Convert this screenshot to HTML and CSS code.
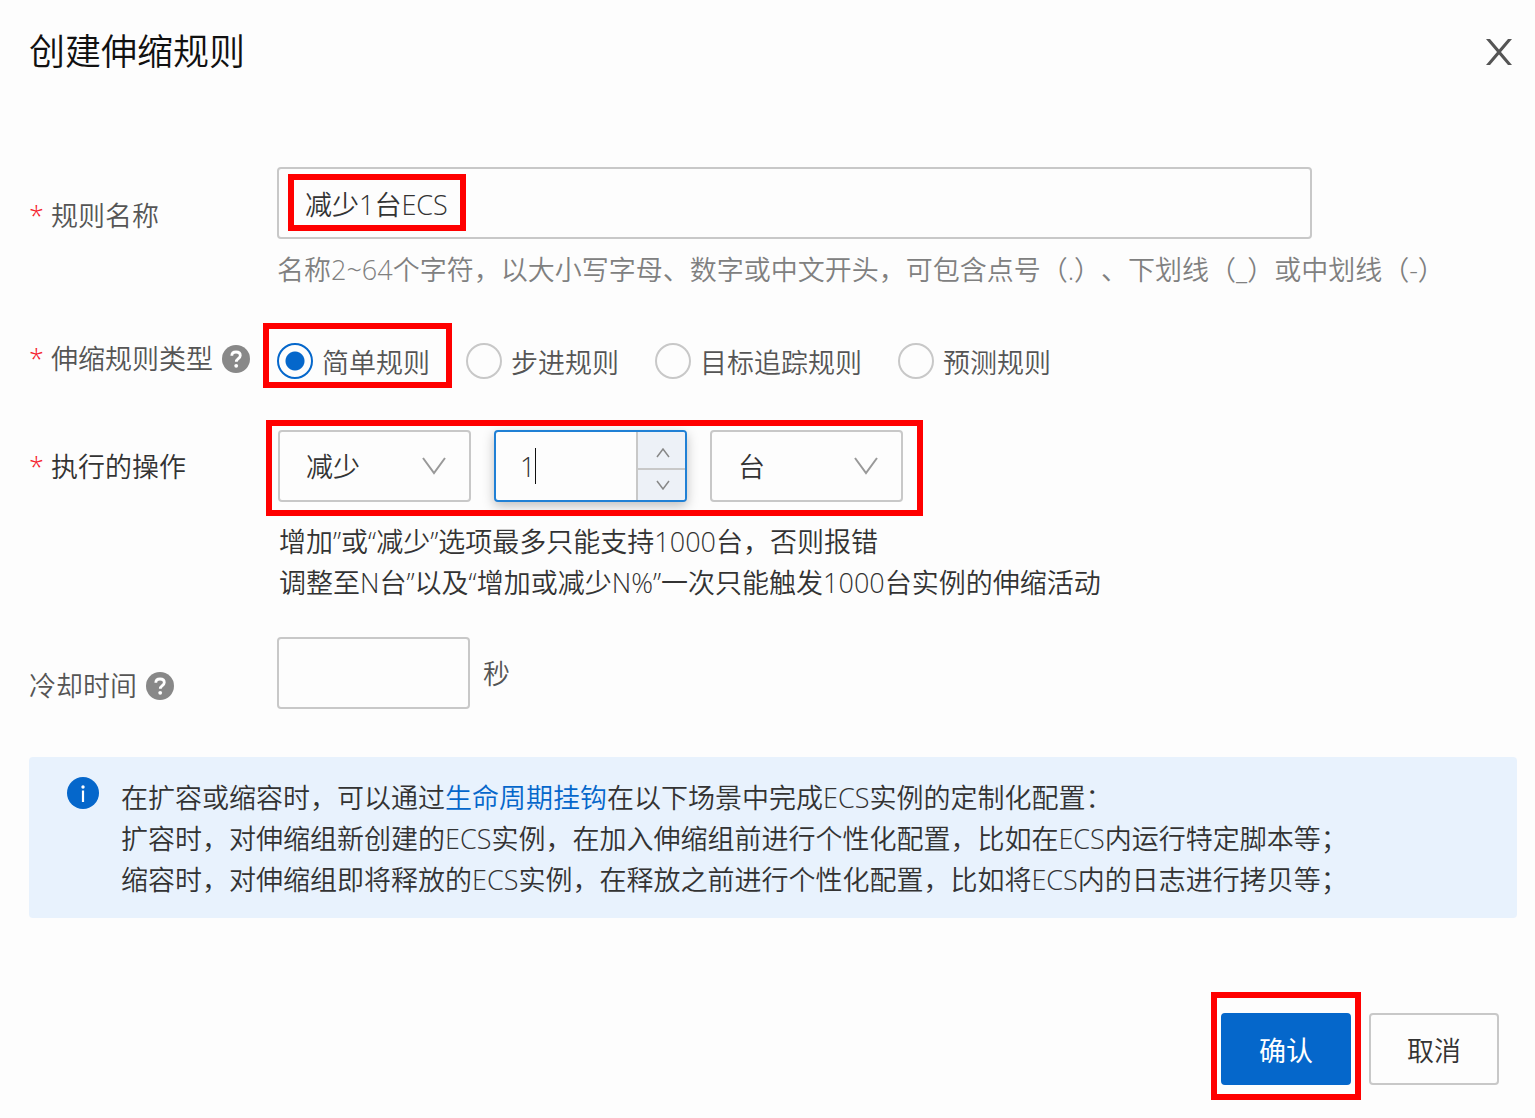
FILE: index.html
```html
<!DOCTYPE html>
<html lang="zh-CN">
<head>
  <meta charset="UTF-8">
  <meta name="viewport" content="width=device-width, initial-scale=1.0">
  <title>创建伸缩规则</title>
  <link rel="stylesheet" href="styles.css">
</head>
<body>
  <header class="header">
    <h1 class="title">创建伸缩规则</h1>
    <button type="button" class="close" aria-label="关闭">
      <svg width="28" height="28" viewBox="0 0 28 28"><path d="M1 1H5L14 11.600 23 1H27L16 14 27 27H23L14 16.400 5 27H1L12 14Z" fill="#555"/></svg>
    </button>
  </header>

  <form class="form">
    <div class="row">
      <label class="label label-low" for="ruleName"><span class="required">*</span>规则名称</label>
      <div class="field">
        <div class="name-box">
          <input type="text" class="input" id="ruleName" value="减少1台ECS">
          <span class="mark mark-name"></span>
        </div>
        <p class="hint">名称2~64个字符，以大小写字母、数字或中文开头，可包含点号（.）、下划线（_）或中划线（-）</p>
      </div>
    </div>

    <div class="row row-radio">
      <div class="label" id="typeLabel"><span class="required">*</span>伸缩规则类型
        <svg class="help" viewBox="0 0 28 28"><circle cx="14" cy="14" r="14" fill="#888"/><path d="M9.8 10.8C9.8 8.4 11.5 7 14 7s4.3 1.4 4.3 3.5c0 3-4 3.200-4 6.200" fill="none" stroke="#fff" stroke-width="2.800"/><circle cx="14.200" cy="20.800" r="1.900" fill="#fff"/></svg>
      </div>
      <div class="field radios" role="radiogroup" aria-labelledby="typeLabel">
        <label class="radio marked mark-radio"><input type="radio" name="type" checked><span class="radio-text">简单规则</span></label>
        <label class="radio"><input type="radio" name="type"><span class="radio-text">步进规则</span></label>
        <label class="radio"><input type="radio" name="type"><span class="radio-text">目标追踪规则</span></label>
        <label class="radio"><input type="radio" name="type"><span class="radio-text">预测规则</span></label>
      </div>
    </div>

    <div class="row row-action">
      <label class="label label-dark label-mid" for="action"><span class="required">*</span>执行的操作</label>
      <div class="field">
        <div class="controls marked mark-controls">
          <div class="control">
            <select class="input select" id="action">
              <option>减少</option>
              <option>增加</option>
              <option>调整至</option>
            </select>
            <svg class="arrow" viewBox="0 0 24 18"><path d="M1 1 12 16 23 1" fill="none" stroke="#999" stroke-width="2"/></svg>
          </div>
          <div class="control number">
            <input type="number" class="number-input" value="1" aria-label="数量">
            <span class="caret"></span>
            <div class="steps">
              <button type="button" class="step" aria-label="加一"><svg width="14" height="10" viewBox="0 0 14 10"><path d="M1 9 7 1 13 9" fill="none" stroke="#888" stroke-width="1.500"/></svg></button>
              <button type="button" class="step" aria-label="减一"><svg width="14" height="10" viewBox="0 0 14 10"><path d="M1 1 7 9 13 1" fill="none" stroke="#888" stroke-width="1.500"/></svg></button>
            </div>
          </div>
          <div class="control">
            <select class="input select" aria-label="单位">
              <option>台</option>
              <option>%</option>
            </select>
            <svg class="arrow" viewBox="0 0 24 18"><path d="M1 1 12 16 23 1" fill="none" stroke="#999" stroke-width="2"/></svg>
          </div>
        </div>
        <p class="note">增加”或“减少”选项最多只能支持1000台，否则报错<br>调整至N台”以及“增加或减少N%”一次只能触发1000台实例的伸缩活动</p>
      </div>
    </div>

    <div class="row row-cooldown">
      <label class="label label-low" for="cooldown">冷却时间
        <svg class="help" viewBox="0 0 28 28"><circle cx="14" cy="14" r="14" fill="#888"/><path d="M9.8 10.8C9.8 8.4 11.5 7 14 7s4.3 1.4 4.3 3.5c0 3-4 3.200-4 6.200" fill="none" stroke="#fff" stroke-width="2.800"/><circle cx="14.200" cy="20.800" r="1.900" fill="#fff"/></svg>
      </label>
      <div class="field cooldown">
        <div class="control"><input type="text" class="input" id="cooldown"></div>
        <span>秒</span>
      </div>
    </div>

    <div class="notice">
      <svg class="info" viewBox="0 0 32 32"><circle cx="16" cy="16" r="16" fill="#0567cb"/><circle cx="16" cy="10" r="1.700" fill="#fff"/><path d="M16 13.500V25" stroke="#fff" stroke-width="2.200"/></svg>
      <p class="notice-text">在扩容或缩容时，可以通过<a href="#">生命周期挂钩</a>在以下场景中完成ECS实例的定制化配置：<br>扩容时，对伸缩组新创建的ECS实例，在加入伸缩组前进行个性化配置，比如在ECS内运行特定脚本等；<br>缩容时，对伸缩组即将释放的ECS实例，在释放之前进行个性化配置，比如将ECS内的日志进行拷贝等；</p>
    </div>

    <footer class="footer">
      <div class="marked mark-confirm"><button type="submit" class="btn btn-primary">确认</button></div>
      <button type="button" class="btn">取消</button>
    </footer>
  </form>
</body>
</html>
```
FILE: styles.css
```css
* {
  box-sizing: border-box;
}
body {
  margin: 0;
  padding: 24px 18px 24px 29px;
  background: #fdfdfd;
  color: #333;
  font-family: "Open Sans", "Noto Sans CJK SC", sans-serif;
  font-weight: 350;
  font-size: 27px;
  line-height: 41px;
  text-spacing-trim: space-all;
}
input, select, button {
  font: inherit;
  color: inherit;
}
p {
  margin: 0;
}
.header {
  display: flex;
  justify-content: space-between;
  align-items: center;
}
.title {
  margin: 0;
  font-size: 36px;
  line-height: 56px;
  font-weight: 350;
  color: #111;
}
.close {
  display: flex;
  padding: 4px;
  border: none;
  background: none;
  cursor: pointer;
}
.form {
  padding-top: 87px;
}
.row {
  display: grid;
  grid-template-columns: 248px minmax(0, 1fr);
}
.row-radio {
  margin-top: 48px;
}
.row-action {
  margin-top: 49px;
}
.row-cooldown {
  margin-top: 34px;
}
.label {
  display: flex;
  align-items: center;
  align-self: start;
  color: #555;
}
.label-dark {
  color: #333;
}
.label-low {
  padding-top: 28px;
}
.label-mid {
  padding-top: 16px;
}
.required {
  width: 22px;
  color: #f5222d;
}
.help {
  width: 28px;
  height: 28px;
  margin-left: 9px;
}
.name-box {
  position: relative;
  max-width: 1035px;
}
.input {
  display: block;
  width: 100%;
  height: 72px;
  padding: 0 26px;
  border: 2px solid #c8c8c8;
  border-radius: 4px;
  background: transparent;
  outline: none;
}
.hint {
  padding-top: 10px;
  color: #808080;
}
.radios {
  display: flex;
  gap: 36px;
  padding-top: 2px;
}
.radio {
  display: flex;
  align-items: center;
  gap: 9px;
  height: 41px;
  color: #555;
}
.radio-text {
  padding-top: 3px;
}
.radio input {
  appearance: none;
  width: 36px;
  height: 36px;
  margin: 0;
  border: 2px solid #c8c8c8;
  border-radius: 50%;
}
.radio input:checked {
  border-color: #0567cb;
  background: radial-gradient(circle, #0567cb 9px, transparent 10px);
}
.controls {
  display: flex;
  gap: 23px;
  width: fit-content;
  margin-left: 1px;
}
.control {
  position: relative;
  width: 193px;
}
.select {
  appearance: none;
}
.arrow {
  position: absolute;
  top: 27px;
  right: 25px;
  width: 24px;
  height: 18px;
  pointer-events: none;
}
.number {
  display: flex;
  height: 72px;
  border: 2px solid #2080d5;
  border-radius: 4px;
  box-shadow: 0 4px 12px rgba(0, 0, 0, 0.25);
  background: #fdfdfd;
  overflow: hidden;
}
.number-input {
  flex: 1;
  min-width: 0;
  padding: 0 0 0 24px;
  border: none;
  background: none;
  outline: none;
  appearance: textfield;
}
.number-input::-webkit-inner-spin-button {
  appearance: none;
}
.caret {
  position: absolute;
  top: 16px;
  left: 39px;
  width: 1px;
  height: 36px;
  background: #111;
}
.steps {
  display: flex;
  flex-direction: column;
  width: 49px;
  border-left: 2px solid #c8c8c8;
  background: #edf1f7;
}
.step {
  flex: 1;
  display: flex;
  align-items: center;
  justify-content: center;
  padding: 0 0 0 2px;
  border: none;
  background: none;
}
.step:first-child {
  padding-top: 6px;
  border-bottom: 2px solid #c8c8c8;
}
.note {
  padding-top: 19px;
  padding-left: 2px;
}
.cooldown {
  display: flex;
  align-items: center;
  gap: 13px;
  color: #555;
}
.notice {
  display: flex;
  gap: 22px;
  margin-top: 48px;
  padding: 20px 38px 18px;
  border-radius: 4px;
  background: #e8f2fd;
}
.info {
  flex: none;
  width: 32px;
  height: 32px;
}
.notice a {
  color: #0567cb;
  text-decoration: none;
}
.footer {
  display: flex;
  justify-content: flex-end;
  gap: 18px;
  padding: 95px 18px 0 0;
}
.btn {
  display: block;
  width: 130px;
  height: 72px;
  padding: 3px 0 0;
  border: 2px solid #c8c8c8;
  border-radius: 4px;
  background: #fdfdfd;
  cursor: pointer;
}
.btn-primary {
  border-color: #0567cb;
  background: #0567cb;
  color: #fff;
  font-weight: 400;
}

/* red highlight frames */
.marked {
  position: relative;
}
.mark,
.marked::after {
  content: "";
  position: absolute;
  border: 6px solid #f00;
  pointer-events: none;
}
.mark-name {
  top: 7px;
  left: 11px;
  width: 178px;
  height: 57px;
}
.mark-radio::after {
  inset: -17px -22px -7px -14px;
}
.mark-controls::after {
  inset: -10px -20px -14px -12px;
}
.mark-confirm::after {
  inset: -21px -10px -15px;
}
```
